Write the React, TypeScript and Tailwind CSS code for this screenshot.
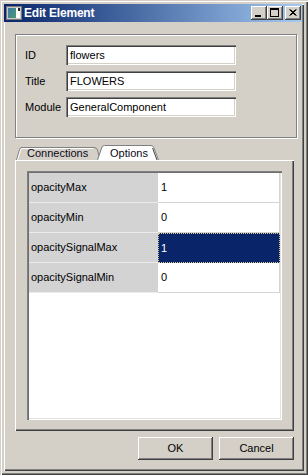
import type { ReactNode } from 'react';

const ROWS: { key: string; value: string; selected?: boolean }[] = [
  { key: 'opacityMax', value: '1' },
  { key: 'opacityMin', value: '0' },
  { key: 'opacitySignalMax', value: '1', selected: true },
  { key: 'opacitySignalMin', value: '0' },
];

const FIELDS = [
  { label: 'ID', value: 'flowers' },
  { label: 'Title', value: 'FLOWERS' },
  { label: 'Module', value: 'GeneralComponent' },
];

function CaptionButton({ children, className = '' }: { children: ReactNode; className?: string }) {
  return (
    <div
      className={`w-[16px] h-[14px] bg-[#d4d0c8] shadow-[inset_-1px_-1px_0_#404040,inset_1px_1px_0_#fff,inset_-2px_-2px_0_#808080] flex ${className}`}
    >
      <svg width="16" height="14" viewBox="0 0 16 14">
        {children}
      </svg>
    </div>
  );
}

function AppIcon() {
  return (
    <svg width="16" height="14" viewBox="0 0 16 14">
      <defs>
        <linearGradient id="ico" x1="0" y1="0" x2="1" y2="1">
          <stop offset="0" stopColor="#3a7aa8" />
          <stop offset="1" stopColor="#4e9a6e" />
        </linearGradient>
      </defs>
      <rect x="0.5" y="0.5" width="15" height="13" fill="#c8c8c8" stroke="#7a7a7a" />
      <rect x="2" y="2" width="8" height="10" fill="url(#ico)" />
      <rect x="10" y="2" width="4" height="10" fill="#fff" />
      <rect x="12" y="2" width="2" height="3" fill="#222" />
    </svg>
  );
}

function Button({ children }: { children: ReactNode }) {
  return (
    <div className="w-[75px] h-[23px] bg-[#d4d0c8] shadow-[inset_-1px_-1px_0_#404040,inset_1px_1px_0_#fff,inset_-2px_-2px_0_#808080] flex items-center justify-center text-[11px] text-black">
      {children}
    </div>
  );
}

export default function App() {
  return (
    <div
      className="w-[308px] h-[475px] bg-[#d4d0c8] p-[4px] shadow-[inset_1px_1px_0_#d4d0c8,inset_2px_2px_0_#fff,inset_-1px_-1px_0_#404040,inset_-2px_-2px_0_#808080]"
      style={{ fontFamily: '"Liberation Sans", Arial, sans-serif' }}
    >
      <div className="w-[300px] h-[467px] shadow-[inset_1px_1px_0_#fff,inset_-1px_-1px_0_#404040,inset_-2px_-2px_0_#808080]">
        {/* title bar */}
        <div className="w-[298px] h-[18px] bg-linear-to-r from-[#0a246a] to-[#a6caf0] flex items-center pl-[2px] pr-[1px]">
          <AppIcon />
          <span className="ml-[2px] text-white font-bold text-[12px] leading-none tracking-[-0.2px]">Edit Element</span>
          <div className="ml-auto flex">
            <CaptionButton>
              <rect x="4" y="9" width="6" height="2" fill="#000" />
            </CaptionButton>
            <CaptionButton>
              <rect x="3.5" y="2.5" width="8" height="8" fill="none" stroke="#000" />
              <rect x="3" y="2" width="9" height="2" fill="#000" />
            </CaptionButton>
            <CaptionButton className="ml-[2px]">
              <path d="M4.5 3.5 L10.5 9.5 M5.5 3.5 L11.5 9.5 M10.5 3.5 L4.5 9.5 M11.5 3.5 L5.5 9.5" stroke="#000" strokeWidth="1" />
            </CaptionButton>
          </div>
        </div>

        <div className="pl-[11px] pt-[12px]">
          {/* group box */}
          <div className="w-[282px] h-[104px] border border-[#808080] shadow-[1px_1px_0_#fff,inset_1px_1px_0_#fff] pl-[9px] pt-[10px] flex flex-col gap-[6px]">
            {FIELDS.map((f) => (
              <div key={f.label} className="flex items-center h-[20px]">
                <span className="w-[41px] text-[11px] text-black">{f.label}</span>
                <div className="w-[170px] h-[20px] bg-white pl-[4px] flex items-center text-[11px] text-black shadow-[inset_1px_1px_0_#808080,inset_2px_2px_0_#404040,inset_-1px_-1px_0_#fff,inset_-2px_-2px_0_#d4d0c8]">
                  {f.value}
                </div>
              </div>
            ))}
          </div>

          {/* tabs */}
          <div className="mt-[7px] h-[15px] flex items-end">
            <div className="relative ml-[1px] w-[84px] h-[13px] pl-[11px] text-[11px] leading-[13px] text-[#0a0a20]">
              <svg className="absolute inset-0" width="84" height="13" viewBox="0 0 84 13">
                <path d="M0.5 13 L3.5 2.5 Q4 0.5 6 0.5 L78 0.5 Q80.5 0.5 81.5 3 L84 13" fill="#d4d0c8" stroke="#808080" />
                <path d="M1.6 13 L4.6 3 Q5 1.5 6.5 1.5 L77.5 1.5" fill="none" stroke="#fff" />
              </svg>
              <span className="relative">Connections</span>
            </div>
            <div className="relative z-10 -ml-[3px] w-[62px] h-[15px] pl-[13px] pt-[2px] text-[11px] leading-[12px] text-[#0a0a20]">
              <svg className="absolute inset-0" width="62" height="15" viewBox="0 0 62 15">
                <path d="M0.5 15 L5 2 Q5.6 0.5 7.5 0.5 L54 0.5 Q56 0.5 56.8 2.5 L61.5 15" fill="#fff" stroke="#808080" />
                <path d="M55.6 3 L60 15" fill="none" stroke="#404040" />
              </svg>
              <span className="relative">Options</span>
            </div>
          </div>

          {/* tab pane */}
          <div className="w-[279px] h-[271px] shadow-[inset_1px_1px_0_#fff,inset_-1px_-1px_0_#404040,inset_-2px_-2px_0_#808080] pl-[12px] pt-[11px]">
            <div className="w-[255px] h-[249px] bg-white p-[2px] shadow-[inset_1px_1px_0_#808080,inset_2px_2px_0_#6e6e6e,inset_-1px_-1px_0_#fff,inset_-2px_-2px_0_#e4e2dc]">
              {ROWS.map((r) => (
                <div key={r.key} className="flex h-[30px] text-[11px] text-black">
                  <div className="w-[129px] bg-[#d3d3d3] border-b border-[#ebebeb] pl-[2px] flex items-center">
                    {r.key}
                  </div>
                  {r.selected ? (
                    <div className="flex-1 bg-[#0a246a] border border-dotted border-[#d9c98c] pl-[2px] flex items-center text-white">
                      {r.value}
                    </div>
                  ) : (
                    <div className="flex-1 bg-white border-b border-r border-[#d4d4d4] pl-[3px] flex items-center">
                      {r.value}
                    </div>
                  )}
                </div>
              ))}
            </div>
          </div>

          {/* dialog buttons */}
          <div className="w-[279px] mt-[6px] flex justify-end gap-[6px]">
            <Button>OK</Button>
            <Button>Cancel</Button>
          </div>
        </div>
      </div>
    </div>
  );
}
